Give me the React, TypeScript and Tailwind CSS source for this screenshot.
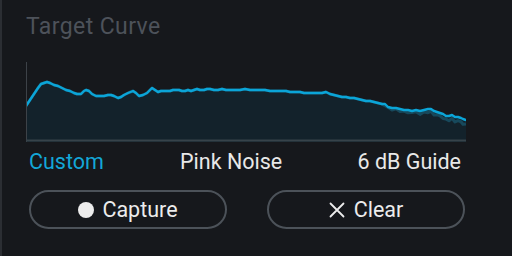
const pts: [number, number][] = [
  [26, 106], [30, 100], [34, 94], [38, 88], [41, 84], [44, 83], [47, 82], [50, 83], [54, 85], [58, 86],
  [62, 88], [66, 90], [70, 91], [74, 93], [77, 94], [81, 94], [84, 91], [86, 90], [89, 91], [92, 94],
  [96, 96], [100, 96], [104, 96], [108, 95], [111, 95], [114, 96], [118, 98], [121, 97], [124, 95],
  [128, 93], [133, 91], [136, 93], [139, 96], [143, 95], [147, 93], [150, 90], [152, 88], [155, 90],
  [158, 92], [161, 91], [164, 91], [167, 91], [170, 91], [173, 90], [176, 90], [179, 90], [182, 91],
  [185, 91], [188, 90], [191, 91], [194, 90], [197, 89], [200, 90], [204, 90], [207, 89], [210, 89],
  [214, 90], [218, 90], [222, 89], [226, 90], [230, 90], [235, 90], [240, 90], [245, 89], [250, 90],
  [256, 90], [260, 90], [265, 90], [270, 91], [276, 91], [282, 91], [286, 91], [290, 92], [295, 92],
  [300, 92], [304, 93], [309, 93], [314, 93], [318, 93], [322, 93], [326, 92], [330, 94], [334, 95],
  [338, 96], [342, 97], [346, 97], [350, 98], [354, 98], [358, 99], [362, 100], [366, 101], [370, 101],
  [374, 102], [378, 103], [382, 104], [385, 104], [388, 107], [392, 108], [396, 108], [400, 109],
  [404, 110], [408, 110], [412, 111], [416, 110], [420, 111], [424, 110], [428, 109], [431, 109],
  [434, 111], [437, 112], [440, 113], [443, 114], [446, 116], [449, 116], [452, 115], [455, 117],
  [458, 117], [461, 118], [463, 119], [466, 120],
];

const X0 = 26;
const Y0 = 62;

function linePath(offset: (x: number) => number) {
  return pts
    .map(([x, y], i) => `${i === 0 ? "M" : "L"}${x - X0} ${y - Y0 + offset(x)}`)
    .join(" ");
}

function TargetChart() {
  const main = linePath(() => 0);
  // dim measured curve that drifts below the target near the top end
  const shadow = linePath((x) => (x < 380 ? 0 : ((x - 380) / 86) * 4 + (x % 7 < 3 ? 1.5 : 0)));
  const fill = `${main} L440 80 L0 80 Z`;
  return (
    <svg width="440" height="80" viewBox="0 0 440 80" className="block">
      <path d={fill} fill="#13222b" />
      <path d={shadow} fill="none" stroke="#17495c" strokeWidth="3" strokeLinejoin="round" />
      <path d={main} fill="none" stroke="#0ba5d8" strokeWidth="2.4" strokeLinejoin="round" strokeLinecap="round" />
      <line x1="0.5" y1="0" x2="0.5" y2="80" stroke="#3d4248" strokeWidth="1" />
      <line x1="0" y1="78.5" x2="440" y2="78.5" stroke="#37434a" strokeWidth="2" />
    </svg>
  );
}

function CrossIcon() {
  return (
    <svg width="16" height="16" viewBox="0 0 16 16" className="shrink-0">
      <path d="M1.5 1.5 L14.5 14.5 M14.5 1.5 L1.5 14.5" stroke="#ececec" strokeWidth="1.8" strokeLinecap="round" />
    </svg>
  );
}

export default function App() {
  return (
    <div className="h-[256px] w-[512px] overflow-hidden border-l-2 border-[#2b2e33] bg-[#16181c] pl-[24px] pt-[16px] font-['Roboto',sans-serif] text-[21.5px] leading-[22px]">
      <div className="text-[23px] tracking-[0.4px] text-[#4d525a]">Target Curve</div>

      <div className="mt-[24px]">
        <TargetChart />
      </div>

      <div className="mt-[9px] flex w-[440px] items-center">
        <span className="ml-[3px] w-[151px] text-[#13a7d8]">Custom</span>
        <span className="text-[#e8e8e8]">Pink Noise</span>
        <span className="ml-auto mr-[5px] text-[#e8e8e8]">6 dB Guide</span>
      </div>

      <div className="ml-[3px] mt-[17px] flex gap-[40px]">
        <button className="flex h-[39px] w-[198px] items-center justify-center gap-[8px] rounded-full border-2 border-[#4c5259] text-[#ececec]">
          <span className="h-[16px] w-[16px] shrink-0 rounded-full bg-[#ececec]" />
          <span>Capture</span>
        </button>
        <button className="flex h-[39px] w-[198px] items-center justify-center gap-[9px] rounded-full border-2 border-[#4c5259] text-[#ececec]">
          <CrossIcon />
          <span>Clear</span>
        </button>
      </div>
    </div>
  );
}
